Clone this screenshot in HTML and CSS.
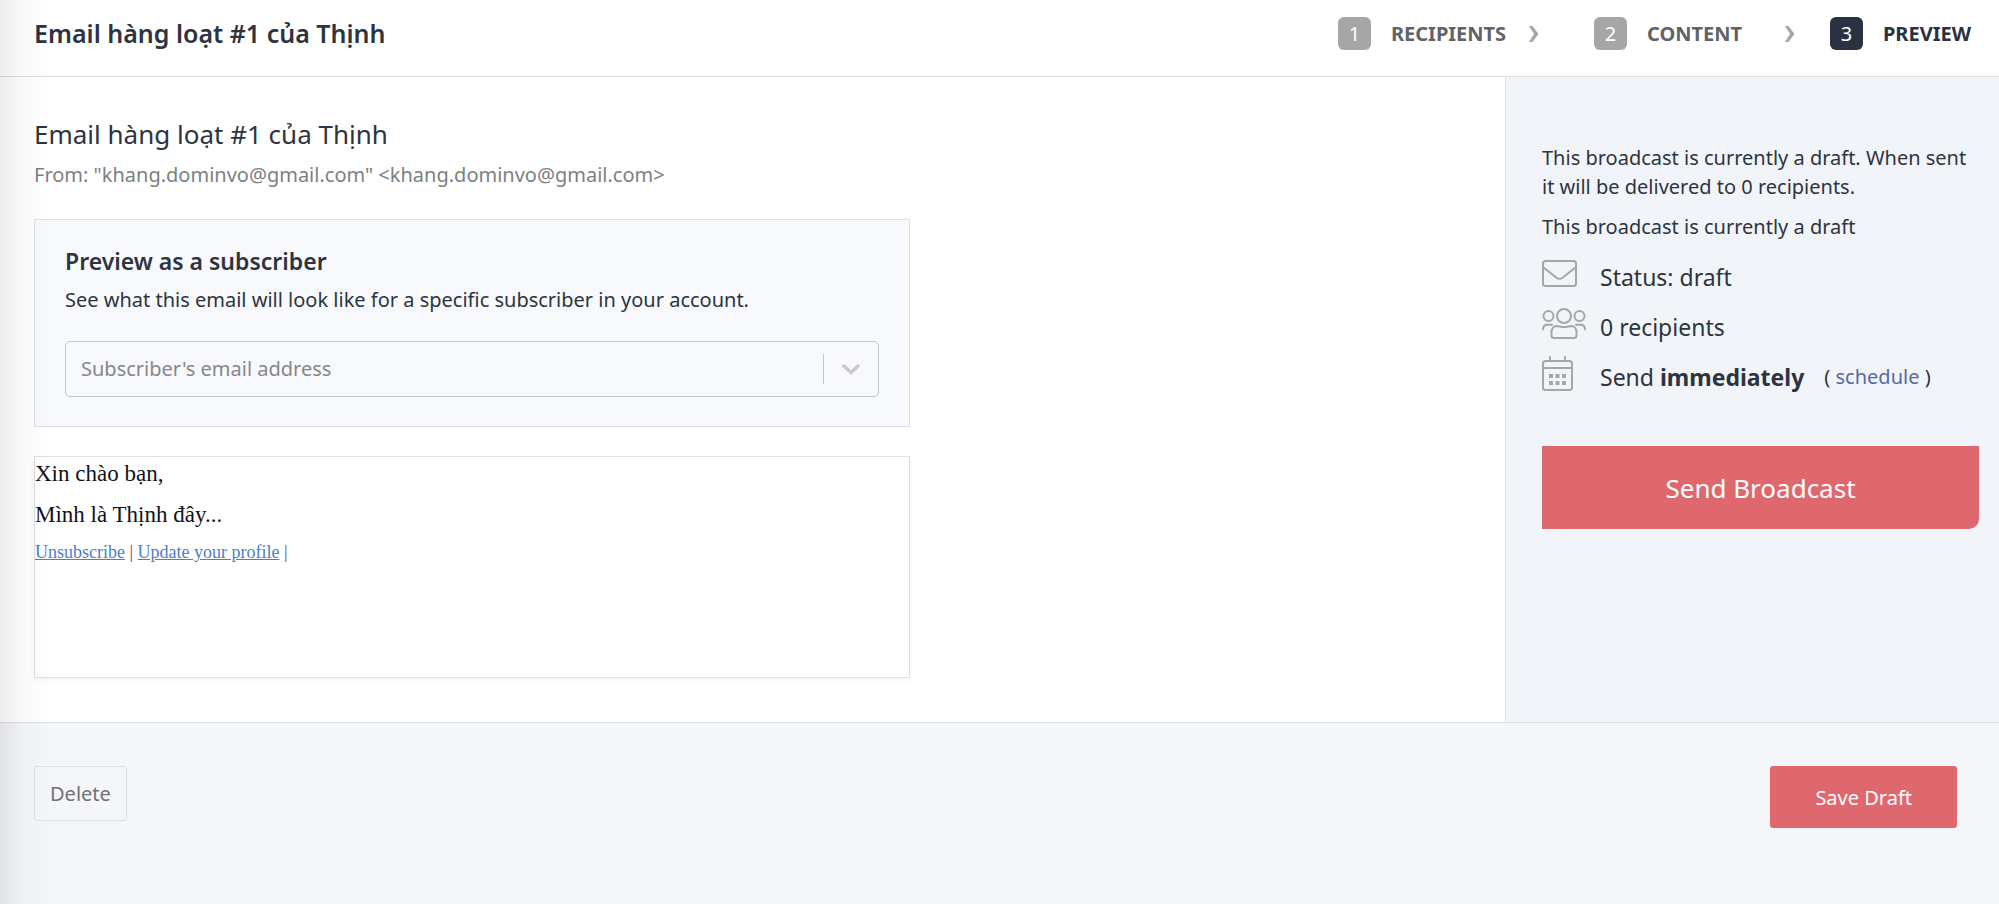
FILE: index.html
```html
<!DOCTYPE html>
<html lang="vi">
    <head>
        <meta charset="UTF-8" />
        <meta name="viewport" content="width=device-width, initial-scale=1.0" />
        <title>Email hàng loạt #1 của Thịnh</title>

        <link rel="stylesheet" href="styles.css">
    </head>

    <body>
        <header class="header">
            <h1 class="header_title">Email hàng loạt #1 của Thịnh</h1>
            <nav class="steps">
                <a href="#recipients" class="step">
                    <span class="step_number">1</span>
                    <span class="step_name">RECIPIENTS</span>
                    <svg class="step_arrow" viewBox="0 0 10 16"><path d="M0 0h3.5L9.5 8l-6 8H0l5-8z" /></svg>
                </a>
                <a href="#content" class="step">
                    <span class="step_number">2</span>
                    <span class="step_name">CONTENT</span>
                    <svg class="step_arrow" viewBox="0 0 10 16"><path d="M0 0h3.5L9.5 8l-6 8H0l5-8z" /></svg>
                </a>
                <a href="#preview" class="step step_active">
                    <span class="step_number">3</span>
                    <span class="step_name">PREVIEW</span>
                </a>
            </nav>
        </header>

        <div class="page">
            <main class="main">
                <h2 class="subject">Email hàng loạt #1 của Thịnh</h2>
                <p class="from">From: "khang.dominvo@gmail.com" &lt;khang.dominvo@gmail.com&gt;</p>

                <section class="subscriber">
                    <h3 class="subscriber_title">Preview as a subscriber</h3>
                    <label for="email" class="subscriber_text">See what this email will look like for a specific subscriber in your account.</label>
                    <div class="search">
                        <input type="text" id="email" class="search_input" placeholder="Subscriber's email address" />
                        <button type="button" class="search_btn" aria-label="Open list">
                            <svg width="18" height="11" viewBox="0 0 18 11"><path d="M2 2l7 6.5L16 2" /></svg>
                        </button>
                    </div>
                </section>

                <article class="email">
                    <p>Xin chào bạn,</p>
                    <p>Mình là Thịnh đây...</p>
                    <p class="email_links"><a href="#unsubscribe">Unsubscribe</a> | <a href="#profile">Update your profile</a> |</p>
                </article>
            </main>

            <aside class="sidebar">
                <p class="sidebar_text">This broadcast is currently a draft. When sent it will be delivered to 0 recipients.</p>
                <p class="sidebar_text">This broadcast is currently a draft</p>

                <ul class="info">
                    <li class="info_item">
                        <svg class="icon" width="44" height="36" viewBox="0 0 44 36">
                            <rect x="1" y="5" width="33" height="25" rx="2.5" />
                            <path d="M1.5 11.5l13 10.2q3 2.2 6 0l13-10.2" />
                        </svg>
                        <span>Status: draft</span>
                    </li>
                    <li class="info_item">
                        <svg class="icon" width="44" height="36" viewBox="0 -2 44 36">
                            <circle cx="22" cy="8" r="7" />
                            <circle cx="6.5" cy="8" r="5" />
                            <circle cx="37.5" cy="8" r="5" />
                            <path d="M15 18q7 2 14 0c3.500 0 5.500 2.800 5.500 6.200v3.300q0 2.500-2.500 2.500H12q-2.500 0-2.500-2.500v-3.300c0-3.400 2-6.200 5.500-6.200z" />
                            <path d="M1 21.5c0-3 1.800-4.800 4.500-4.800H10M43 21.500c0-3-1.800-4.800-4.500-4.800H34" />
                        </svg>
                        <span>0 recipients</span>
                    </li>
                    <li class="info_item">
                        <svg class="icon" width="44" height="36" viewBox="0 1 44 36">
                            <rect x="1" y="6" width="29" height="29" rx="2.5" />
                            <path d="M1 13h29M8 2v4M23 2v4" />
                            <path class="icon_dots" d="M7 19h4v4H7zM13.500 19h4v4h-4zM20 19h4v4h-4zM7 26h4v4H7zM13.500 26h4v4h-4zM20 26h4v4h-4z" />
                        </svg>
                        <span>Send <strong>immediately</strong></span>
                        <span class="schedule">( <a href="#schedule">schedule</a> )</span>
                    </li>
                </ul>

                <button type="button" class="btn btnSend">Send Broadcast</button>
            </aside>
        </div>

        <footer class="footer">
            <button type="button" class="btn btnDelete">Delete</button>
            <button type="button" class="btn btnSave">Save Draft</button>
        </footer>
    </body>
</html>
```
FILE: styles.css
```css
:root {
    --dark: #2d3440;
    --gray: #a6a6a6;
    --line: #dcdfe3;
    --red: #df686e;
}

* {
    box-sizing: border-box;
}

body {
    margin: 0;
    min-height: 100vh;
    display: flex;
    flex-direction: column;
    background-color: white;
    color: var(--dark);
    font-family: "Noto Sans", "Open Sans", sans-serif;
    font-size: 20px;
    line-height: 30px;
}

/* shadow of the menu on the left */
body::before {
    content: "";
    position: fixed;
    top: 0;
    bottom: 0;
    left: 0;
    width: 50px;
    background-image: linear-gradient(90deg, rgb(0 0 0 / 0.07), rgb(0 0 0 / 0.02) 50%, transparent);
    pointer-events: none;
}

h1,
h2,
h3,
p,
ul {
    margin: 0;
    padding: 0;
}

a {
    text-decoration: none;
}

.header {
    display: flex;
    justify-content: space-between;
    align-items: center;
    padding: 17px 28px 26px 34px;
    border-bottom: 1px solid var(--line);
}
.header_title {
    font-size: 25px;
    font-weight: 600;
    line-height: 33px;
}

.steps {
    display: grid;
    grid-template-columns: 256px 236px auto;
}
.step {
    display: flex;
    align-items: center;
    gap: 20px;
    color: #606368;
    font-weight: 700;
}
.step_number {
    width: 33px;
    height: 33px;
    border-radius: 6px;
    background-color: var(--gray);
    color: white;
    font-weight: 400;
    line-height: 33px;
    text-align: center;
}
.step_name {
    min-width: 118px;
}
.step_arrow {
    width: 10px;
    height: 16px;
    fill: var(--gray);
}
.step_active {
    color: #2b3140;
}
.step_active .step_number {
    background-color: #2b3140;
}
.step_active .step_name {
    min-width: 0;
}

.page {
    display: flex;
}
.main {
    flex: 1;
    padding: 39px 34px 44px;
}
.subject {
    margin-bottom: 8px;
    font-size: 26px;
    font-weight: 400;
    line-height: 36px;
}
.from {
    color: #7d7f83;
}

.subscriber {
    max-width: 876px;
    margin: 29px 0;
    padding: 25px 30px 29px;
    border: 1px solid var(--line);
    background-color: #f8f9fd;
}
.subscriber_title {
    margin-bottom: 8px;
    font-size: 23px;
    font-weight: 600;
    line-height: 32px;
}
.subscriber_text {
    display: block;
    margin-bottom: 26px;
}

.search {
    display: flex;
    align-items: center;
    height: 56px;
    border: 1px solid #c4c6c8;
    border-radius: 5px;
}
.search_input {
    flex: 1;
    padding: 0 15px;
    border: 0;
    outline: 0;
    background: none;
    color: inherit;
    font: inherit;
}
.search_input::placeholder {
    color: #85878a;
    opacity: 1;
}
.search_btn {
    display: flex;
    justify-content: center;
    align-items: center;
    width: 55px;
    height: 30px;
    padding: 0;
    border: 0;
    border-left: 1px solid #c4c6c8;
    background: none;
    cursor: pointer;
}
.search_btn svg {
    fill: none;
    stroke: #c8c9cb;
    stroke-width: 3.5;
    stroke-linecap: round;
}

.email {
    max-width: 876px;
    min-height: 222px;
    padding-top: 2px;
    border: 1px solid var(--line);
    box-shadow: 0 2px 6px rgb(0 0 0 / 0.05);
    color: #10131a;
    font-family: "Liberation Serif", serif;
    font-size: 23px;
}
.email p {
    margin-bottom: 11px;
}
.email .email_links {
    margin-bottom: 0;
    color: #55585e;
    font-size: 18px;
    line-height: 22px;
}
.email a {
    color: #4a7fcb;
    text-decoration: underline;
}

.sidebar {
    width: 494px;
    padding: 66px 20px 40px 36px;
    border-left: 1px solid var(--line);
    background-color: #f1f5f9;
}
.sidebar_text {
    margin-bottom: 11px;
    line-height: 29px;
}

.info {
    list-style: none;
    margin-bottom: 44px;
    font-size: 23px;
}
.info_item {
    display: flex;
    align-items: center;
    height: 50px;
}
.icon {
    margin-right: 14px;
    margin-bottom: 6px;
    fill: none;
    stroke: var(--gray);
    stroke-width: 2;
    stroke-linecap: round;
}
.icon .icon_dots {
    fill: var(--gray);
    stroke: none;
}
.schedule {
    margin-left: 20px;
    font-size: 20px;
}
.schedule a {
    color: #5868a6;
}

.btn {
    border: 0;
    border-radius: 3px;
    background-color: var(--red);
    color: white;
    font-family: inherit;
    font-size: 20px;
    cursor: pointer;
}
.btnSend {
    width: 100%;
    height: 83px;
    border-radius: 0 0 10px 0;
    font-size: 26px;
}

.footer {
    flex: 1;
    display: flex;
    justify-content: space-between;
    align-items: flex-start;
    padding: 43px 42px 60px 34px;
    border-top: 1px solid var(--line);
    background-color: #f4f6fa;
}
.btnDelete {
    height: 55px;
    padding: 0 15px;
    border: 1px solid var(--line);
    background: none;
    color: #6f7276;
}
.btnSave {
    height: 62px;
    padding: 0 45px;
}
```
